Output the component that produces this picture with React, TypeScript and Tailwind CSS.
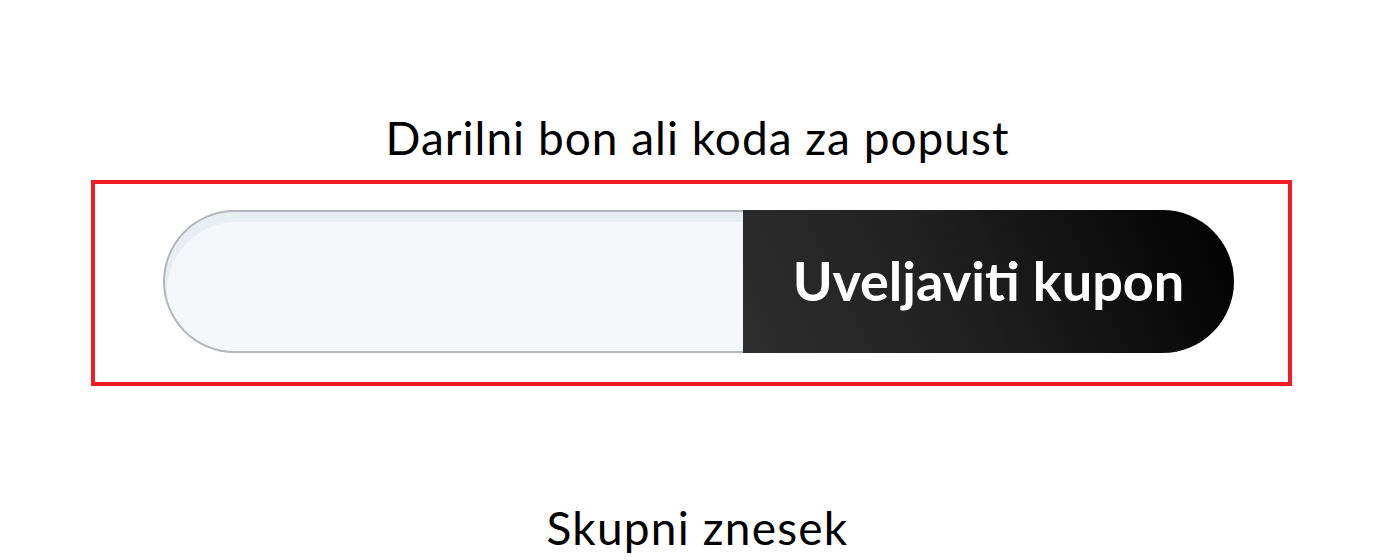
export default function App() {
  return (
    <div className="min-h-[560px] bg-white font-['Lato',sans-serif] text-black">
      <div className="flex flex-col items-center pl-[12px] pt-[108px]">
        <h2 className="text-[46px] leading-[60px] font-normal tracking-[1px]">Darilni bon ali koda za popust</h2>
      </div>

      <form className="mx-auto mt-[12px] flex w-[1201px] items-center border-4 border-[#f01c26] pb-[29px] pl-[68px] pr-[54px] pt-[26px]">
        <input
          type="text"
          className="h-[143px] flex-1 rounded-l-full border-2 border-r-0 border-[#b3b6ba] bg-[#f5f7fa] shadow-[inset_2px_10px_0_0_#e9eef2] outline-none"
        />
        <button
          type="button"
          className="h-[143px] w-[491px] rounded-r-full bg-[linear-gradient(65deg,#2e2e2e_0%,#1f1f1f_45%,#000_100%)] pb-[2px] text-[54px] font-bold text-white"
        >
          Uveljaviti kupon
        </button>
      </form>

      <div className="flex flex-col items-center pl-[12px] pt-[112px]">
        <h2 className="text-[46px] leading-[60px] font-normal tracking-[1.2px]">Skupni znesek</h2>
      </div>
    </div>
  );
}
